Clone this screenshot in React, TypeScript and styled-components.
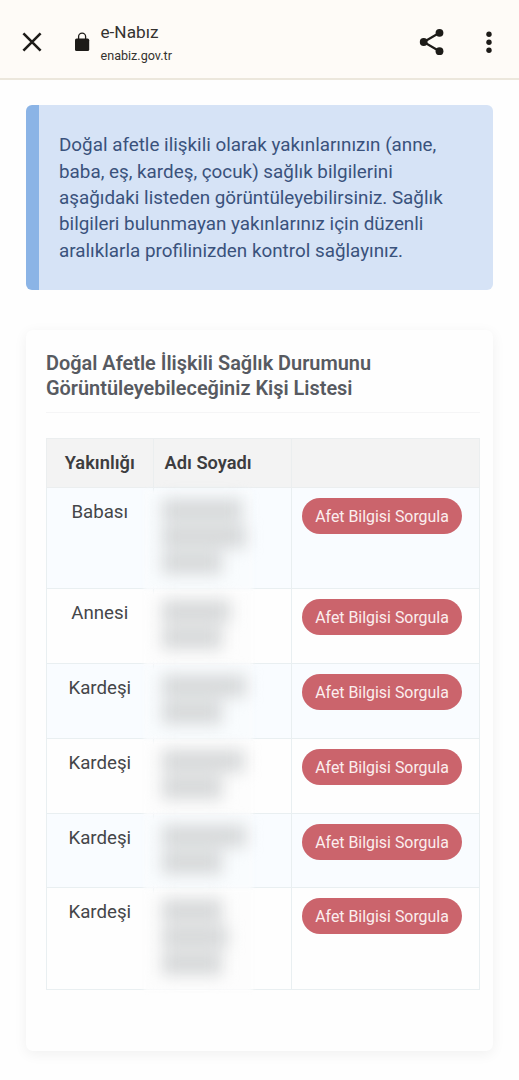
import React from "react";
import styled, { createGlobalStyle } from "styled-components";

const GlobalStyle = createGlobalStyle`
  * { box-sizing: border-box; }
  body {
    margin: 0;
    background: #fefefe;
    font-family: Roboto, "Liberation Sans", sans-serif;
  }
`;

const Page = styled.div`
  height: 1080px;
  overflow: hidden;
`;

const BrowserBar = styled.header`
  display: flex;
  align-items: center;
  height: 80px;
  padding: 5px 26.5px 0 20px;
  background: #fefbf7;
  border-bottom: 2px solid #ece7dc;
  color: #1d1b18;
`;

const Icon = styled.svg<{ $gap?: number }>`
  display: block;
  flex: none;
  margin-left: ${(p) => p.$gap ?? 0}px;
`;

const Site = styled.div`
  flex: 1;
  margin-left: 10.5px;
  padding-top: 3px;
`;

const SiteName = styled.div`
  font-size: 17.2px;
  line-height: 22px;
  color: #34322f;
`;

const SiteHost = styled.div`
  margin-top: 3px;
  font-size: 12.6px;
  line-height: 20px;
  color: #34322f;
`;

const Notice = styled.p`
  width: 467px;
  height: 185px;
  margin: 25.4px 0 0 26px;
  padding: 26.8px 0 0 20px;
  border-left: 13px solid #8bb4e6;
  border-radius: 6px;
  background: #d6e3f6;
  color: #3a527c;
  font-size: 18.83px;
  line-height: 26.4px;
  white-space: pre-line;
`;

const Card = styled.section`
  width: 467px;
  height: 721px;
  margin: 39.6px 0 0 26px;
  padding: 19.5px 13.5px 0 20px;
  border-radius: 7px;
  background: #fefefe;
  box-shadow: 0 3px 14px rgba(0, 0, 0, 0.06);
`;

const Title = styled.h2`
  margin: 0 0 24.5px;
  padding-top: 1.2px;
  height: 64px;
  border-bottom: 1px solid #f5f5f6;
  color: #575a61;
  font-size: 19.92px;
  font-weight: 600;
  line-height: 25.3px;
  white-space: pre-line;
`;

const Table = styled.table`
  width: 433px;
  border-collapse: collapse;
  table-layout: fixed;
`;

const HeadCell = styled.th<{ $width: number; $align?: string }>`
  width: ${(p) => p.$width}px;
  height: 49px;
  padding: 0 0 0 ${(p) => (p.$align === "left" ? 11 : 0)}px;
  border: 1px solid #ebeeef;
  background: #f3f3f3;
  color: #3d3d3f;
  font-size: 18.3px;
  font-weight: 600;
  text-align: ${(p) => p.$align ?? "center"};
`;

const Row = styled.tr<{ $height: number; $tinted: boolean }>`
  height: ${(p) => p.$height}px;
  background: ${(p) => (p.$tinted ? "#f9fcff" : "#fefefe")};
`;

const Cell = styled.td<{ $align?: string; $top?: number }>`
  padding: ${(p) => p.$top ?? 10}px 0 0 ${(p) => (p.$align === "left" ? 10 : 0)}px;
  border: 1px solid #e9eff1;
  color: #454649;
  font-size: 18.7px;
  line-height: 26.4px;
  text-align: ${(p) => p.$align ?? "center"};
  vertical-align: top;
`;

const Redacted = styled.div<{ $height: number; $tinted: boolean }>`
  position: relative;
  height: ${(p) => p.$height}px;

  &::before {
    content: "";
    position: absolute;
    inset: -8px 38px -4px -20px;
    background: ${(p) => (p.$tinted ? "#f9fcfe" : "#fdfdfd")};
    filter: blur(2px);
  }
`;

const RedactedLines = styled.div`
  position: relative;
  display: flex;
  flex-direction: column;
  gap: 4px;
  margin-left: -2px;
  padding-top: 1px;
  filter: blur(8px);
`;

const RedactedLine = styled.div<{ $width: number }>`
  width: ${(p) => p.$width}px;
  height: 22.4px;
  background: #d6d8d9;
`;

const QueryButton = styled.button`
  display: block;
  width: 160px;
  height: 36px;
  padding: 0 0 0 1px;
  border: 0;
  border-radius: 18px;
  background: #cb646c;
  color: #fbeeee;
  font: 400 15.9px/37px Roboto, "Liberation Sans", sans-serif;
`;

const relatives = [
  { relation: "Babası", height: 101.5, lines: [80, 84, 60] },
  { relation: "Annesi", height: 74.5, lines: [68, 60] },
  { relation: "Kardeşi", height: 75, lines: [84, 60] },
  { relation: "Kardeşi", height: 75, lines: [82, 60] },
  { relation: "Kardeşi", height: 74.5, lines: [84, 60] },
  { relation: "Kardeşi", height: 101.5, lines: [60, 66, 60] },
];

export default function App() {
  return (
    <Page>
      <GlobalStyle />
      <BrowserBar>
        <Icon width="24" height="24" viewBox="0 0 24 24" stroke="currentColor" strokeWidth="2.6">
          <path d="M3.4 3.4 20.6 20.6M20.6 3.4 3.4 20.6" />
        </Icon>
        <Icon $gap={30} width="16" height="22" viewBox="0 0 16 22">
          <rect x="1" y="7.6" width="14.2" height="12.4" rx="1.6" fill="currentColor" />
          <path d="M4.6 8.6V5.6a3.5 3.5 0 0 1 7 0v3" fill="none" stroke="currentColor" strokeWidth="1.3" />
        </Icon>
        <Site>
          <SiteName>e-Nabız</SiteName>
          <SiteHost>enabiz.gov.tr</SiteHost>
        </Site>
        <Icon width="26" height="28" viewBox="0 0 26 28" fill="currentColor">
          <path d="M20.5 4.8 4.7 14l15.8 9.2" fill="none" stroke="currentColor" strokeWidth="2.2" />
          <circle cx="20.5" cy="4.8" r="3.9" />
          <circle cx="4.7" cy="14" r="3.9" />
          <circle cx="20.5" cy="23.2" r="3.9" />
        </Icon>
        <Icon $gap={40} width="8" height="24" viewBox="0 0 8 24" fill="currentColor">
          <circle cx="4" cy="4.2" r="2.7" />
          <circle cx="4" cy="12.2" r="2.7" />
          <circle cx="4" cy="20.2" r="2.7" />
        </Icon>
      </BrowserBar>

      <Notice>
        {`Doğal afetle ilişkili olarak yakınlarınızın (anne,
baba, eş, kardeş, çocuk) sağlık bilgilerini
aşağıdaki listeden görüntüleyebilirsiniz. Sağlık
bilgileri bulunmayan yakınlarınız için düzenli
aralıklarla profilinizden kontrol sağlayınız.`}
      </Notice>

      <Card>
        <Title>{"Doğal Afetle İlişkili Sağlık Durumunu\nGörüntüleyebileceğiniz Kişi Listesi"}</Title>
        <Table>
          <thead>
            <tr>
              <HeadCell $width={106.5}>Yakınlığı</HeadCell>
              <HeadCell $width={138} $align="left">Adı Soyadı</HeadCell>
              <HeadCell $width={188.5} />
            </tr>
          </thead>
          <tbody>
            {relatives.map((r, i) => (
              <Row key={i} $height={r.height} $tinted={i % 2 === 0}>
                <Cell $top={11}>{r.relation}</Cell>
                <Cell $align="left">
                  <Redacted $height={r.height - 13} $tinted={i % 2 === 0}>
                    <RedactedLines>
                      {r.lines.map((w, j) => (
                        <RedactedLine key={j} $width={w} />
                      ))}
                    </RedactedLines>
                  </Redacted>
                </Cell>
                <Cell $align="left">
                  <QueryButton>Afet Bilgisi Sorgula</QueryButton>
                </Cell>
              </Row>
            ))}
          </tbody>
        </Table>
      </Card>
    </Page>
  );
}
